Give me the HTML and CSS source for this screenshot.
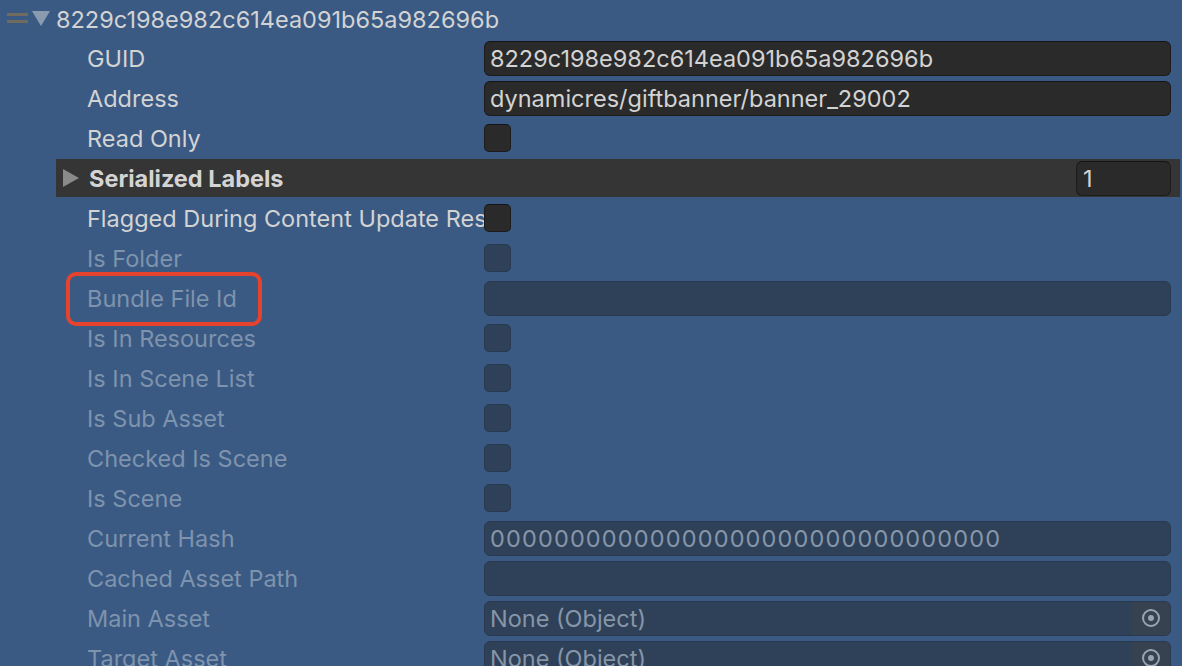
FILE: index.html
```html
<!DOCTYPE html>
<html>
<head>
<meta charset="utf-8">
<link rel="stylesheet" href="styles.css">
</head>
<body>
<div class="inspector">
  <div class="header">
    <svg class="drag" width="22" height="12" viewBox="0 0 22 12"><rect x="0" y="1" width="21" height="3" fill="#6f6c5f"/><rect x="0" y="8" width="21" height="3" fill="#6f6c5f"/></svg>
    <svg class="fold" width="18" height="16" viewBox="0 0 18 16"><polygon points="0,0 18,0 9,15" fill="#8a9bb0"/></svg>
    <span class="title">8229c198e982c614ea091b65a982696b</span>
  </div>
  <div class="props">
    <div class="row"><div class="label">GUID</div><div class="field">8229c198e982c614ea091b65a982696b</div></div>
    <div class="row"><div class="label">Address</div><div class="field">dynamicres/giftbanner/banner_29002</div></div>
    <div class="row"><div class="label">Read Only</div><div class="check"></div></div>
    <div class="section">
      <svg class="sec-arrow" width="16" height="18" viewBox="0 0 16 18"><polygon points="0,0 16,9 0,18" fill="#8a8a8a"/></svg>
      <span class="sec-title">Serialized Labels</span>
      <div class="count">1</div>
    </div>
    <div class="row"><div class="label">Flagged During Content Update Restriction</div><div class="check"></div></div>
    <div class="row off"><div class="label">Is Folder</div><div class="check"></div></div>
    <div class="row off"><div class="label">Bundle File Id</div><div class="field"></div></div>
    <div class="row off"><div class="label">Is In Resources</div><div class="check"></div></div>
    <div class="row off"><div class="label">Is In Scene List</div><div class="check"></div></div>
    <div class="row off"><div class="label">Is Sub Asset</div><div class="check"></div></div>
    <div class="row off"><div class="label">Checked Is Scene</div><div class="check"></div></div>
    <div class="row off"><div class="label">Is Scene</div><div class="check"></div></div>
    <div class="row off"><div class="label">Current Hash</div><div class="field hash">00000000000000000000000000000000</div></div>
    <div class="row off"><div class="label">Cached Asset Path</div><div class="field"></div></div>
    <div class="row off"><div class="label">Main Asset</div><div class="field obj"><span class="obj-text">None (Object)</span><span class="picker"><svg width="20" height="20" viewBox="0 0 20 20"><circle cx="10" cy="10" r="8" fill="none" stroke="#9aa4b0" stroke-width="2"/><circle cx="10" cy="10" r="3" fill="#9aa4b0"/></svg></span></div></div>
    <div class="row off"><div class="label">Target Asset</div><div class="field obj"><span class="obj-text">None (Object)</span><span class="picker"><svg width="20" height="20" viewBox="0 0 20 20"><circle cx="10" cy="10" r="8" fill="none" stroke="#9aa4b0" stroke-width="2"/><circle cx="10" cy="10" r="3" fill="#9aa4b0"/></svg></span></div></div>
  </div>
  <div class="highlight"></div>
</div>
</body>
</html>
```
FILE: styles.css
```css
html, body {
  margin: 0;
  padding: 0;
}
body {
  width: 1182px;
  height: 666px;
  overflow: hidden;
  background: #3a5a84;
  font-family: Inter, "Noto Sans", sans-serif;
  font-size: 23.5px;
  color: #d3d3d3;
}
.inspector {
  position: relative;
  height: 666px;
}
.header {
  height: 38px;
  display: flex;
  align-items: center;
  padding-left: 7px;
}
.drag {
  margin-top: -2px;
}
.fold {
  margin-left: 3px;
  margin-top: -1px;
}
.title {
  margin-left: 6px;
}
.props {
  margin-left: 56px;
  width: 1124px;
}
.row {
  height: 40px;
  display: flex;
  align-items: center;
}
.label {
  width: 397px;
  padding-left: 31px;
  white-space: nowrap;
  overflow: hidden;
  flex: none;
  margin-top: 1px;
}
.field {
  flex: 1;
  height: 35px;
  margin-right: 9px;
  box-sizing: border-box;
  background: #2a2a2a;
  border: 1px solid #1c1c1c;
  border-top-color: #141414;
  border-radius: 6px;
  padding-left: 5px;
  line-height: 34px;
  white-space: nowrap;
  overflow: hidden;
}
.field.hash {
  letter-spacing: 1.15px;
}
.check {
  width: 27px;
  height: 28px;
  box-sizing: border-box;
  background: #2a2a2a;
  border: 1px solid #1c1c1c;
  border-top-color: #141414;
  border-radius: 5px;
}
.off .label {
  color: #7e93ad;
}
.off .field,
.off .check {
  background: #2f4158;
  border-color: #293a50;
  color: #8696a9;
}
.section {
  height: 38px;
  margin: 1px 0 1px 0;
  background: #353535;
  display: flex;
  align-items: center;
}
.sec-arrow {
  margin-left: 7px;
  margin-top: -1px;
}
.sec-title {
  margin-left: 10px;
  font-weight: 700;
  color: #d4d4d4;
  flex: 1;
}
.count {
  width: 95px;
  height: 35px;
  box-sizing: border-box;
  margin-right: 9px;
  background: #2a2a2a;
  border: 1px solid #1c1c1c;
  border-top-color: #141414;
  border-radius: 6px;
  padding-left: 6px;
  line-height: 34px;
}
.field.obj {
  display: flex;
  padding-left: 0;
}
.obj-text {
  flex: 1;
  padding-left: 5px;
}
.picker {
  width: 38px;
  display: flex;
  align-items: center;
  justify-content: center;
  background: #374250;
}
.highlight {
  position: absolute;
  left: 66px;
  top: 272px;
  width: 196px;
  height: 54px;
  box-sizing: border-box;
  border: 4px solid #e5432d;
  border-radius: 10px;
}
```
